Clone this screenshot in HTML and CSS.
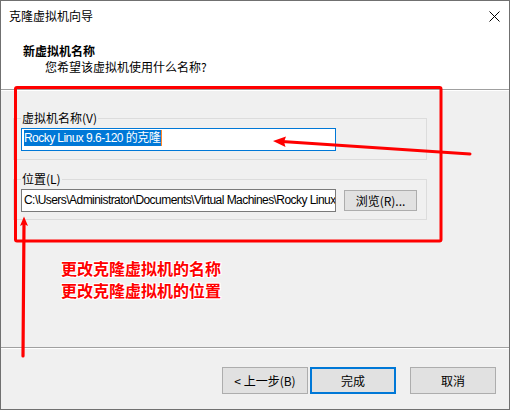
FILE: index.html
```html
<!DOCTYPE html>
<html lang="zh-CN">
<head>
<meta charset="utf-8">
<title>克隆虚拟机向导</title>
<link rel="stylesheet" href="styles.css">
</head>
<body>
<div class="screen">
  <div class="window">
    <div class="titlebar">
      <span class="title">克隆虚拟机向导</span>
      <svg class="close" width="11" height="11" viewBox="0 0 11 11">
        <path d="M0.5 0.5 L10.5 10.5 M10.5 0.5 L0.5 10.5" stroke="#000" stroke-width="1" fill="none"/>
      </svg>
    </div>
    <div class="header">
      <div class="heading">新虚拟机名称</div>
      <div class="subheading">您希望该虚拟机使用什么名称?</div>
    </div>
    <div class="rule"></div>
    <div class="content">
      <fieldset class="group">
        <legend>虚拟机名称(V)</legend>
        <div class="textbox focused"><span class="selected">Rocky Linux 9.6-120 的克隆</span><span class="caret"></span></div>
      </fieldset>
      <fieldset class="group group-location">
        <legend>位置(L)</legend>
        <div class="row">
          <div class="textbox">C:\Users\Administrator\Documents\Virtual Machines\Rocky Linux</div>
          <button class="btn browse">浏览(R)...</button>
        </div>
      </fieldset>
    </div>
    <div class="rule"></div>
    <div class="footer">
      <button class="btn">&lt; 上一步(B)</button>
      <button class="btn default">完成</button>
      <button class="btn cancel">取消</button>
    </div>
  </div>

  <svg class="markup" width="510" height="410" viewBox="0 0 510 410">
    <rect x="15.5" y="87.5" width="425.5" height="153.5" rx="1.5" fill="none" stroke="#ff0000" stroke-width="3"/>
    <line x1="470" y1="154" x2="282" y2="141.6" stroke="#ff0000" stroke-width="3" stroke-linecap="round"/>
    <polygon points="273,141 286,136.5 284,141.8 285.5,147" fill="#ff0000"/>
    <line x1="23" y1="356" x2="24" y2="223" stroke="#ff0000" stroke-width="3.2" stroke-linecap="round"/>
    <polygon points="24,216.5 28,226 24,224 20,226" fill="#ff0000"/>
  </svg>

  <div class="note">更改克隆虚拟机的名称<br>更改克隆虚拟机的位置</div>
</div>
</body>
</html>
```

FILE: styles.css
```css
html, body {
  margin: 0;
  padding: 0;
  background: #f0f0f0;
}

.screen {
  position: relative;
  width: 510px;
  height: 410px;
  font-family: "Noto Sans CJK SC", "Noto Sans", sans-serif;
  font-size: 12px;
  color: #000;
}

.window {
  width: 510px;
  height: 410px;
  box-sizing: border-box;
  border: 1px solid #707070;
  background: #f0f0f0;
  display: flex;
  flex-direction: column;
}

/* title bar */
.titlebar {
  height: 30px;
  flex: none;
  background: #fff;
  display: flex;
  align-items: center;
  padding-left: 8px;
}

.title {
  line-height: 16px;
}

.close {
  margin-left: auto;
  margin-right: 9px;
  display: block;
}

/* wizard header */
.header {
  height: 58px;
  flex: none;
  box-sizing: border-box;
  background: #fff;
  padding: 12px 0 0 22px;
  line-height: 16px;
}

.heading {
  font-weight: bold;
}

.subheading {
  padding-left: 22px;
}

.rule {
  flex: none;
  height: 0;
  border-top: 1px solid #a0a0a0;
  border-bottom: 1px solid #fff;
}

/* page body */
.content {
  flex: 1;
  padding: 20px 0 0 12px;
}

.group {
  width: 414px;
  box-sizing: border-box;
  margin: 0;
  padding: 3px 7px 8px 7px;
  border: 1px solid #dcdcdc;
  min-width: 0;
}

.group-location {
  margin-top: 12px;
  padding-bottom: 7px;
}

.group legend {
  padding: 0 1px;
  line-height: 14px;
  font-size: 12px;
}

.row {
  display: flex;
  align-items: center;
}

/* single-line edit fields use a tighter latin face */
.textbox {
  width: 315px;
  height: 23px;
  box-sizing: border-box;
  border: 1px solid #7a7a7a;
  background: #fff;
  padding: 0 2px;
  font-family: "Liberation Sans", "Noto Sans CJK SC", sans-serif;
  letter-spacing: -0.55px;
  line-height: 21px;
  white-space: nowrap;
  overflow: hidden;
  display: flex;
  align-items: flex-start;
}

.textbox.focused {
  border-color: #0078d7;
}

.selected {
  display: block;
  margin-top: 1px;
  padding-right: 1px;
  background: #0078d7;
  color: #fff;
  line-height: 16px;
  height: 16px;
}

.caret {
  display: block;
  margin-top: 1px;
  width: 1px;
  height: 16px;
  background: #ff8728;
}

/* push buttons */
.btn {
  box-sizing: border-box;
  width: 86px;
  height: 27px;
  margin: 0;
  padding: 0;
  background: #e1e1e1;
  border: 1px solid #adadad;
  border-radius: 0;
  font-family: inherit;
  font-size: 12px;
  color: #000;
  line-height: 16px;
}

.btn.default {
  border: 2px solid #0078d7;
}

.browse {
  width: 73px;
  height: 21px;
  margin-left: 8px;
}

.footer {
  height: 60px;
  flex: none;
  box-sizing: border-box;
  padding: 18px 13px 0 0;
  display: flex;
  justify-content: flex-end;
  align-items: flex-start;
  gap: 2px;
}

.btn.cancel {
  margin-left: 12px;
}

/* red markup drawn over the dialog */
.markup {
  position: absolute;
  left: 0;
  top: 0;
  pointer-events: none;
}

.note {
  position: absolute;
  left: 61px;
  top: 257px;
  color: #ff0000;
  font-weight: bold;
  font-size: 16px;
  line-height: 22px;
  text-shadow: 1px 0 #fff, -1px 0 #fff, 0 1px #fff, 0 -1px #fff,
    1px 1px #fff, -1px -1px #fff, 1px -1px #fff, -1px 1px #fff;
}
```
